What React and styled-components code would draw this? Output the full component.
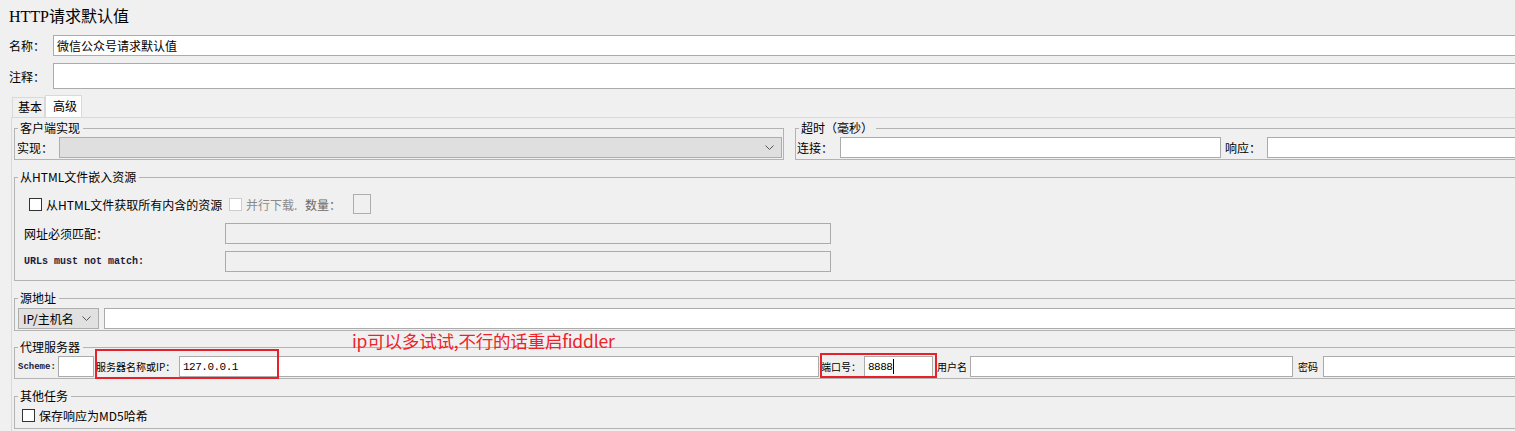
import React from 'react';
import styled, { createGlobalStyle } from 'styled-components';

const GlobalStyle = createGlobalStyle`
  html, body {
    margin: 0;
    padding: 0;
    background: #f0f0f0;
    overflow: hidden;
  }
  body {
    font-family: "Noto Sans CJK SC", "Liberation Sans", sans-serif;
    font-size: 12px;
    color: #000;
  }
`;

const Page = styled.div`
  position: relative;
  width: 1540px;
  height: 431px;
  padding-top: 5px;
  box-sizing: border-box;
`;

const Title = styled.div`
  height: 24px;
  line-height: 24px;
  padding-left: 9px;
  margin-bottom: 6px;
  font-family: "Liberation Serif", "Noto Sans CJK SC", serif;
  font-size: 16px;
`;

const FieldRow = styled.div`
  display: flex;
  align-items: center;
  padding-left: 9px;
  margin-top: ${(p) => p.$top || 0}px;
`;

const Label = styled.span`
  flex: none;
  width: ${(p) => p.$w}px;
  margin-left: ${(p) => p.$ml || 0}px;
  font-size: ${(p) => p.$size || 12}px;
  color: ${(p) => p.$color || '#000'};
  white-space: nowrap;
  overflow: hidden;
`;

const CodeLabel = styled(Label)`
  font-family: "Liberation Mono", monospace;
  font-weight: bold;
  color: #1b1b3a;
`;

const TextBox = styled.div`
  box-sizing: border-box;
  flex: ${(p) => (p.$w ? 'none' : 1)};
  width: ${(p) => (p.$w ? `${p.$w}px` : 'auto')};
  height: ${(p) => p.$h || 21}px;
  display: flex;
  align-items: center;
  padding-left: 3px;
  background: ${(p) => (p.$disabled ? '#f0f0f0' : '#fff')};
  border: 1px solid #ababab;
  font-size: 12px;
  white-space: nowrap;
`;

const MonoValue = styled.span`
  font-family: "Liberation Mono", monospace;
  font-size: 11px;
  letter-spacing: -0.5px;
`;

const Caret = styled.span`
  display: inline-block;
  width: 1px;
  height: 15px;
  margin-left: 1px;
  background: #000;
`;

const TabBar = styled.div`
  display: flex;
  align-items: flex-end;
  height: 22px;
  margin: 6px 0 0 12px;
`;

const Tab = styled.div`
  box-sizing: border-box;
  width: ${(p) => p.$w}px;
  height: ${(p) => (p.$active ? 22 : 20)}px;
  line-height: ${(p) => (p.$active ? 20 : 18)}px;
  padding-left: ${(p) => (p.$active ? 7 : 5)}px;
  background: ${(p) => (p.$active ? '#fff' : '#f0f0f0')};
  border: 1px solid #d9d9d9;
  border-bottom: none;
`;

const Panel = styled.div`
  margin-left: 11px;
  height: 320px;
  padding: 3px 0 0 2px;
  border: 1px solid #d9d9d9;
  border-right: none;
`;

const GroupRow = styled.div`
  display: flex;
  gap: 11px;
`;

const Group = styled.fieldset`
  box-sizing: border-box;
  flex: ${(p) => (p.$w ? 'none' : 1)};
  width: ${(p) => (p.$w ? `${p.$w}px` : 'auto')};
  min-width: 0;
  margin: ${(p) => p.$top || 0}px 0 0 0;
  padding: 0;
  border: 1px solid #b3b3b3;
`;

const Legend = styled.legend`
  margin-left: 3px;
  padding: 0 3px 0 2px;
  font-size: 12px;
  line-height: 14px;
`;

const GroupBody = styled.div`
  display: flex;
  flex-direction: ${(p) => (p.$column ? 'column' : 'row')};
  align-items: ${(p) => (p.$column ? 'stretch' : 'center')};
  padding: ${(p) => p.$pad};
`;

const Line = styled.div`
  display: flex;
  align-items: center;
  height: ${(p) => p.$h || 21}px;
  margin: ${(p) => p.$top || 0}px 0 0 ${(p) => p.$left || 0}px;
`;

const Combo = styled.div`
  box-sizing: border-box;
  flex: ${(p) => (p.$w ? 'none' : 1)};
  width: ${(p) => (p.$w ? `${p.$w}px` : 'auto')};
  height: 21px;
  display: flex;
  align-items: center;
  justify-content: space-between;
  padding: 0 7px 0 4px;
  margin-right: ${(p) => p.$mr || 0}px;
  background: ${(p) => (p.$disabled ? '#dfdfdf' : '#e1e1e1')};
  border: 1px solid #adadad;
  font-size: 12px;
`;

const Check = styled.span`
  box-sizing: border-box;
  flex: none;
  width: 13px;
  height: 13px;
  margin-right: 4px;
  background: #fff;
  border: 1px solid ${(p) => (p.$disabled ? '#cccccc' : '#333')};
`;

const SmallBox = styled.div`
  box-sizing: border-box;
  width: 18px;
  height: 20px;
  border: 1px solid #adadad;
`;

const RedBox = styled.div`
  position: absolute;
  box-sizing: border-box;
  left: ${(p) => p.$x}px;
  top: ${(p) => p.$y}px;
  width: ${(p) => p.$w}px;
  height: ${(p) => p.$h}px;
  border: 2px solid #e8202a;
  pointer-events: none;
`;

const Note = styled.div`
  position: absolute;
  left: 352px;
  top: 330px;
  font-family: "Noto Sans CJK SC", "Liberation Sans", sans-serif;
  font-size: 17.5px;
  letter-spacing: -0.2px;
  line-height: 22px;
  color: #ec2328;
  white-space: nowrap;
`;

const Chevron = () => (
  <svg width="9" height="6" viewBox="0 0 9 6">
    <path d="M0.5 0.5 L4.5 4.5 L8.5 0.5" fill="none" stroke="#555" strokeWidth="1" />
  </svg>
);

const App = () => {
  return (
    <Page>
      <GlobalStyle />
      <Title>HTTP请求默认值</Title>

      <FieldRow>
        <Label $w={44}>名称：</Label>
        <TextBox $h={21}>微信公众号请求默认值</TextBox>
      </FieldRow>
      <FieldRow $top={7}>
        <Label $w={44}>注释：</Label>
        <TextBox $h={26} />
      </FieldRow>

      <TabBar>
        <Tab $w={33}>基本</Tab>
        <Tab $w={37} $active>高级</Tab>
      </TabBar>

      <Panel>
        <GroupRow>
          <Group $w={770}>
            <Legend>客户端实现</Legend>
            <GroupBody $pad="2px 1px 1px 2px">
              <Label $w={42}>实现：</Label>
              <Combo $disabled>
                <span />
                <Chevron />
              </Combo>
            </GroupBody>
          </Group>
          <Group>
            <Legend>超时（毫秒）</Legend>
            <GroupBody $pad="2px 0 1px 1px">
              <Label $w={43}>连接：</Label>
              <TextBox $w={381} />
              <Label $w={42} $ml={4}>响应：</Label>
              <TextBox />
            </GroupBody>
          </Group>
        </GroupRow>

        <Group $top={10}>
          <Legend>从HTML文件嵌入资源</Legend>
          <GroupBody $column $pad="10px 0 8px 0">
            <Line $h={20} $left={14}>
              <Check />
              <Label $w={183}>从HTML文件获取所有内含的资源</Label>
              <Check $disabled />
              <Label $w={59} $color="#8a8a8a">并行下载.</Label>
              <Label $w={48} $color="#6a6a6a">数量：</Label>
              <SmallBox />
            </Line>
            <Line $top={9} $left={9}>
              <Label $w={201}>网址必须匹配：</Label>
              <TextBox $w={606} $disabled />
            </Line>
            <Line $top={7} $left={9}>
              <CodeLabel $w={201} $size={10}>URLs must not match:</CodeLabel>
              <TextBox $w={606} $disabled />
            </Line>
          </GroupBody>
        </Group>

        <Group $top={10}>
          <Legend>源地址</Legend>
          <GroupBody $pad="3px 0 1px 3px">
            <Combo $w={81} $mr={5}>
              <span>IP/主机名</span>
              <Chevron />
            </Combo>
            <TextBox />
          </GroupBody>
        </Group>

        <Group $top={9}>
          <Legend>代理服务器</Legend>
          <GroupBody $pad="2px 0 1px 3px">
            <CodeLabel $w={40} $size={9}>Scheme:</CodeLabel>
            <TextBox $w={36} />
            <Label $w={83} $ml={2} $size={10}>服务器名称或IP：</Label>
            <TextBox $w={640}>
              <MonoValue>127.0.0.1</MonoValue>
            </TextBox>
            <Label $w={43} $ml={2} $size={10}>端口号：</Label>
            <TextBox $w={69}>
              <MonoValue>8888</MonoValue>
              <Caret />
            </TextBox>
            <Label $w={33} $ml={4} $size={10}>用户名</Label>
            <TextBox $w={323} />
            <Label $w={25} $ml={5} $size={10}>密码</Label>
            <TextBox />
          </GroupBody>
        </Group>

        <Group $top={10}>
          <Legend>其他任务</Legend>
          <GroupBody $pad="4px 0 4px 7px">
            <Check />
            <Label $w={200}>保存响应为MD5哈希</Label>
          </GroupBody>
        </Group>
      </Panel>

      <Note>ip可以多试试,不行的话重启fiddler</Note>
      <RedBox $x={95} $y={349} $w={184} $h={30} />
      <RedBox $x={820} $y={353} $w={117} $h={25} />
    </Page>
  );
};

export default App;
